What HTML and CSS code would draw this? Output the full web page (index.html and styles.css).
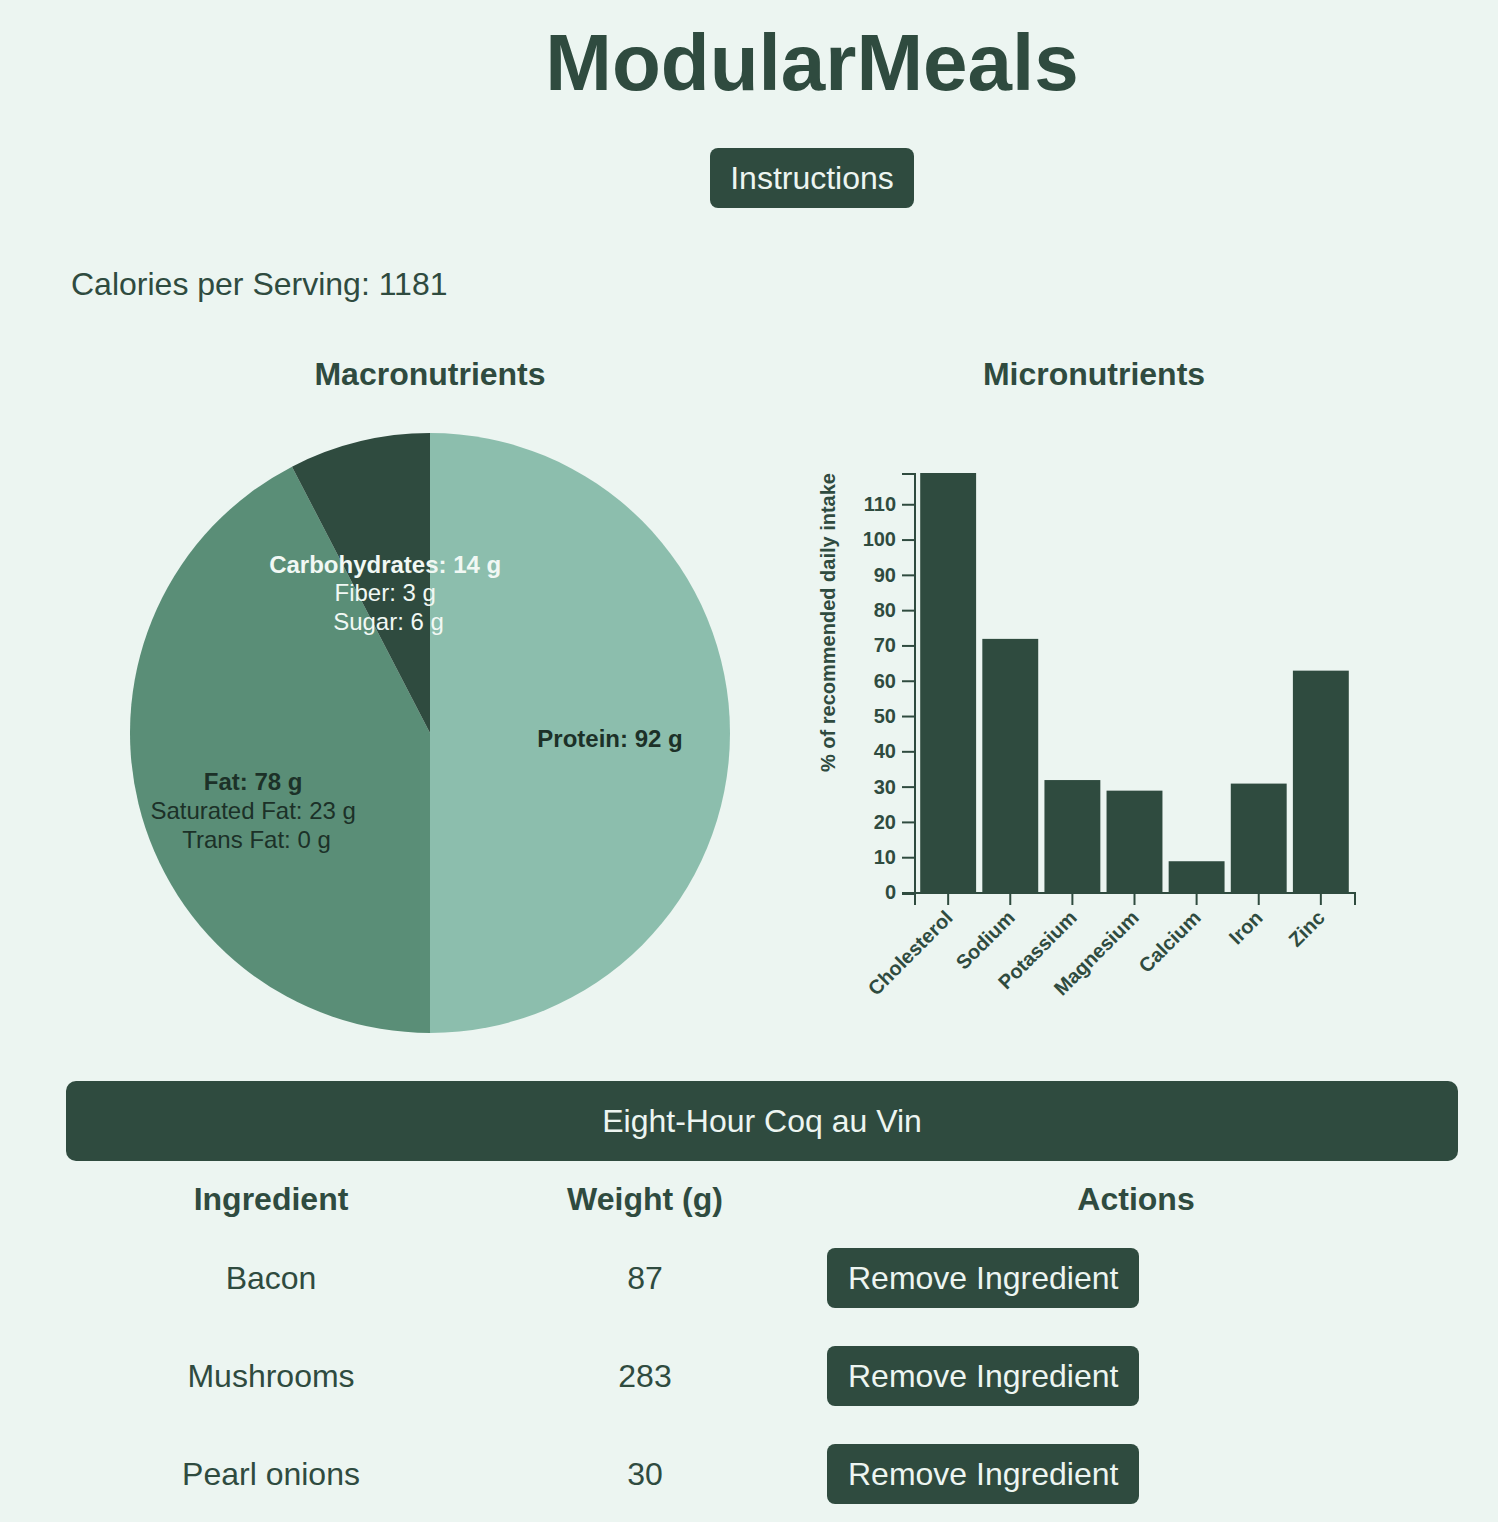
FILE: index.html
```html
<!DOCTYPE html>
<html lang="en">
<head>
<meta charset="utf-8">
<title>ModularMeals</title>
<link rel="stylesheet" href="styles.css">
</head>
<body>
<div class="page">
  <header class="header">
    <h1 class="title">ModularMeals</h1>
    <div class="btn-row"><button class="btn btn-instructions">Instructions</button></div>
  </header>

  <p class="calories">Calories per Serving: 1181</p>

  <section class="charts">
    <div class="chart">
      <h2 class="chart-title">Macronutrients</h2>
      <svg class="chart-svg" width="600" height="600" viewBox="0 0 600 600">
        <path d="M300,300 L300,0 A300,300 0 0 1 300,600 Z" fill="#8cbead"/>
        <path d="M300,300 L300,600 A300,300 0 0 1 161.98,33.63 Z" fill="#5a8e77"/>
        <path d="M300,300 L161.98,33.63 A300,300 0 0 1 300,0 Z" fill="#2f4b3f"/>
        <text class="pie-label dark" text-anchor="middle" x="480" y="300">
          <tspan class="pie-main" x="480" dy="0.6em">Protein: 92 g</tspan>
        </text>
        <text class="pie-label dark" text-anchor="middle" x="126.5" y="342.6">
          <tspan class="pie-main" x="126.5" dy="0.6em">Fat: 78 g</tspan>
          <tspan x="126.5" dy="1.2em">Saturated Fat: 23 g</tspan>
          <tspan x="126.5" dy="1.2em">Trans Fat: 0 g</tspan>
        </text>
        <text class="pie-label light" text-anchor="middle" x="258.5" y="125.1">
          <tspan class="pie-main" x="258.5" dy="0.6em">Carbohydrates: 14 g</tspan>
          <tspan x="258.5" dy="1.2em">Fiber: 3 g</tspan>
          <tspan x="258.5" dy="1.2em">Sugar: 6 g</tspan>
        </text>
      </svg>
    </div>

    <div class="chart">
      <h2 class="chart-title">Micronutrients</h2>
      <svg class="chart-svg" width="600" height="600" viewBox="0 0 600 600">
        <g transform="translate(120,40)">
          <g class="bars">
            <rect x="6.21" y="0" width="55.9" height="420"/>
            <rect x="68.32" y="165.88" width="55.9" height="254.12"/>
            <rect x="130.44" y="307.06" width="55.9" height="112.94"/>
            <rect x="192.55" y="317.65" width="55.9" height="102.35"/>
            <rect x="254.66" y="388.24" width="55.9" height="31.76"/>
            <rect x="316.78" y="310.59" width="55.9" height="109.41"/>
            <rect x="378.89" y="197.65" width="55.9" height="222.35"/>
          </g>
          <g class="axis">
            <path d="M-12,1 H1 V421 H-12" fill="none"/>
            <line x1="-12" x2="0" y1="420" y2="420"/>
            <line x1="-12" x2="0" y1="384.71" y2="384.71"/>
            <line x1="-12" x2="0" y1="349.41" y2="349.41"/>
            <line x1="-12" x2="0" y1="314.12" y2="314.12"/>
            <line x1="-12" x2="0" y1="278.82" y2="278.82"/>
            <line x1="-12" x2="0" y1="243.53" y2="243.53"/>
            <line x1="-12" x2="0" y1="208.24" y2="208.24"/>
            <line x1="-12" x2="0" y1="172.94" y2="172.94"/>
            <line x1="-12" x2="0" y1="137.65" y2="137.65"/>
            <line x1="-12" x2="0" y1="102.35" y2="102.35"/>
            <line x1="-12" x2="0" y1="67.06" y2="67.06"/>
            <line x1="-12" x2="0" y1="31.76" y2="31.76"/>
            <path d="M1,432 V420 H441 V432" fill="none"/>
            <line x1="34.16" x2="34.16" y1="420" y2="432"/>
            <line x1="96.27" x2="96.27" y1="420" y2="432"/>
            <line x1="158.39" x2="158.39" y1="420" y2="432"/>
            <line x1="220.5" x2="220.5" y1="420" y2="432"/>
            <line x1="282.61" x2="282.61" y1="420" y2="432"/>
            <line x1="344.73" x2="344.73" y1="420" y2="432"/>
            <line x1="406.84" x2="406.84" y1="420" y2="432"/>
          </g>
          <g class="tick-labels" text-anchor="end">
            <text x="-18" y="420" dy="0.32em">0</text>
            <text x="-18" y="384.71" dy="0.32em">10</text>
            <text x="-18" y="349.41" dy="0.32em">20</text>
            <text x="-18" y="314.12" dy="0.32em">30</text>
            <text x="-18" y="278.82" dy="0.32em">40</text>
            <text x="-18" y="243.53" dy="0.32em">50</text>
            <text x="-18" y="208.24" dy="0.32em">60</text>
            <text x="-18" y="172.94" dy="0.32em">70</text>
            <text x="-18" y="137.65" dy="0.32em">80</text>
            <text x="-18" y="102.35" dy="0.32em">90</text>
            <text x="-18" y="67.06" dy="0.32em">100</text>
            <text x="-18" y="31.76" dy="0.32em">110</text>
          </g>
          <g class="tick-labels" text-anchor="end">
            <text transform="translate(40,446) rotate(-45)">Cholesterol</text>
            <text transform="translate(102,446) rotate(-45)">Sodium</text>
            <text transform="translate(164,446) rotate(-45)">Potassium</text>
            <text transform="translate(226,446) rotate(-45)">Magnesium</text>
            <text transform="translate(288,446) rotate(-45)">Calcium</text>
            <text transform="translate(350,446) rotate(-45)">Iron</text>
            <text transform="translate(412,446) rotate(-45)">Zinc</text>
          </g>
          <text class="tick-labels" transform="rotate(-90)" x="0" y="-79" text-anchor="end">% of recommended daily intake</text>
        </g>
      </svg>
    </div>
  </section>

  <div class="recipe-banner">Eight-Hour Coq au Vin</div>

  <table class="ingredients">
    <colgroup>
      <col class="col-name">
      <col class="col-weight">
      <col class="col-actions">
    </colgroup>
    <thead>
      <tr><th>Ingredient</th><th>Weight (g)</th><th>Actions</th></tr>
    </thead>
    <tbody>
      <tr><td>Bacon</td><td>87</td><td class="actions"><button class="btn btn-remove">Remove Ingredient</button></td></tr>
      <tr><td>Mushrooms</td><td>283</td><td class="actions"><button class="btn btn-remove">Remove Ingredient</button></td></tr>
      <tr><td>Pearl onions</td><td>30</td><td class="actions"><button class="btn btn-remove">Remove Ingredient</button></td></tr>
    </tbody>
  </table>
</div>
</body>
</html>
```

FILE: styles.css
```css
* { box-sizing: border-box; }

html, body {
  margin: 0;
  padding: 0;
  background: #ecf5f1;
  color: #2f4b3f;
  font-family: "Liberation Sans", Arial, Helvetica, sans-serif;
}

.page {
  width: 1392px;
  margin-left: 66px;
}

.header {
  padding-left: 100px;
  text-align: center;
}

.title {
  margin: 23px 0 0;
  font-size: 80px;
  line-height: 80px;
  font-weight: 700;
  color: #2f4b3f;
}

.btn-row {
  margin-top: 45px;
  height: 60px;
}

.btn {
  display: inline-block;
  border: none;
  background: #2f4b3f;
  color: #edf5f1;
  font-family: "Liberation Sans", Arial, Helvetica, sans-serif;
  border-radius: 8px;
  cursor: pointer;
  margin: 0;
}

.btn-instructions {
  font-size: 32px;
  line-height: 36px;
  padding: 12px 20px;
  height: 60px;
}

.calories {
  margin: 58px 0 0 5px;
  font-size: 32px;
  line-height: 36px;
}

.charts {
  display: flex;
  justify-content: space-evenly;
  margin-top: 54px;
}

.chart {
  width: 600px;
  display: flex;
  flex-direction: column;
  align-items: center;
}

.chart-title {
  margin: 0;
  font-size: 32px;
  line-height: 36px;
  font-weight: 700;
}

.chart-svg {
  display: block;
  margin-top: 41px;
  overflow: visible;
}

.pie-label {
  font-family: "Liberation Sans", Arial, Helvetica, sans-serif;
  font-size: 24px;
}

.pie-label.dark { fill: #1c3128; }
.pie-label.light { fill: #f1f8f4; }

.pie-main { font-weight: 700; }

.bars rect { fill: #2f4b3f; }

.axis path,
.axis line {
  stroke: #2f4b3f;
  stroke-width: 2;
  fill: none;
}

.tick-labels {
  font-family: "Liberation Sans", Arial, Helvetica, sans-serif;
  font-size: 20px;
  font-weight: 700;
  fill: #2f4b3f;
}

.recipe-banner {
  margin-top: 48px;
  height: 80px;
  line-height: 80px;
  background: #2f4b3f;
  color: #edf5f1;
  border-radius: 10px;
  text-align: center;
  font-size: 32px;
}

.ingredients {
  width: 1392px;
  border-collapse: collapse;
  table-layout: fixed;
  font-size: 32px;
}

.col-name { width: 410px; }
.col-weight { width: 338px; }
.col-actions { width: 644px; }

.ingredients th {
  font-weight: 700;
  line-height: 36px;
  padding: 20px 0 12px;
  text-align: center;
}

.ingredients td {
  line-height: 36px;
  padding: 19px 0;
  text-align: center;
  vertical-align: middle;
}

.ingredients td.actions {
  text-align: left;
  padding-left: 13px;
}

.btn-remove {
  font-size: 32px;
  line-height: 36px;
  padding: 12px 21px;
  height: 60px;
  vertical-align: middle;
}
```
